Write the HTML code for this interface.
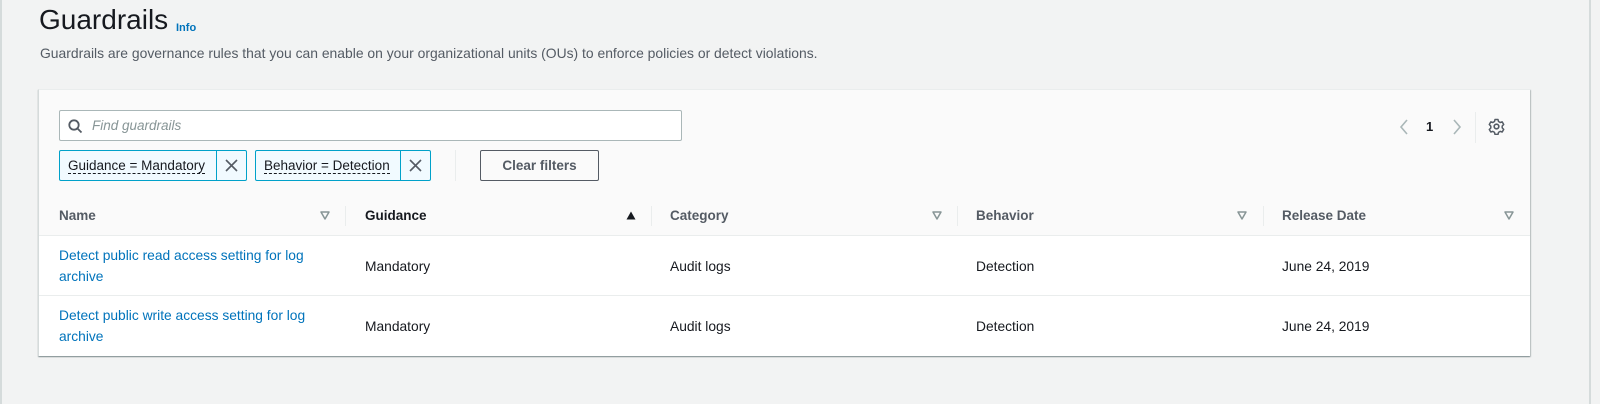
<!DOCTYPE html><html><head><style>
*{box-sizing:border-box;margin:0;padding:0}
body{width:1600px;height:404px;background:#f2f3f3;font-family:"Liberation Sans",sans-serif;color:#16191f;position:relative;overflow:hidden}
.lb{position:absolute;left:0;top:0;width:2px;height:404px;background:#d5dbdb}
.rb{position:absolute;left:1589px;top:0;width:2px;height:404px;background:#d5dbdb}
.a{position:absolute;white-space:nowrap}
h1{position:absolute;left:39px;top:4px;font-size:28px;font-weight:normal}
.info{position:absolute;left:176px;top:22px;font-size:11px;font-weight:bold;color:#0073bb}
.desc{left:40px;top:45px;font-size:13.9px;color:#545b64}
.card{position:absolute;left:38px;top:89px;width:1492px;height:267px;background:#fff;border-top:1px solid #eaeded;border-left:1px solid #d5dbdb;box-shadow:0 1px 1px 0 rgba(0,28,36,.35),1px 1px 1px 0 rgba(0,28,36,.2)}
.hdr{position:absolute;left:0;top:0;width:100%;height:146px;background:#fafafa;border-bottom:1px solid #eaeded}
.search{position:absolute;left:20px;top:20px;width:623px;height:31px;border:1px solid #aab7b8;background:#fff;border-radius:2px}
.search span{position:absolute;left:32px;top:7px;font-size:13.5px;font-style:italic;color:#879596}
.tok{position:absolute;top:60px;height:31px;border:1px solid #00a1c9;background:#f1faff;border-radius:2px;font-size:13.5px}
.tok .t{position:absolute;left:8px;top:7px;border-bottom:1px dashed #16191f;line-height:15px}
.tok .x{position:absolute;right:0;top:0;width:30px;height:29px;border-left:1px solid #00a1c9}
.clr{position:absolute;left:441px;top:60px;width:119px;height:31px;border:1px solid #545b64;border-radius:2px;font-size:13.5px;font-weight:bold;color:#545b64;text-align:center;line-height:29px}
.th{position:absolute;top:118px;font-size:13.5px;font-weight:bold;color:#545b64}
.sep{position:absolute;top:116px;width:1px;height:20px;background:#eaeded}
.tri{position:absolute;top:121px}
.row{position:absolute;left:0;width:100%;border-bottom:1px solid #eaeded}
.c{position:absolute;font-size:13.8px}
.lnk{color:#0073bb;line-height:21px}
</style></head><body>
<div class="lb"></div><div class="rb"></div>
<h1>Guardrails</h1><div class="a info">Info</div>
<div class="a desc">Guardrails are governance rules that you can enable on your organizational units (OUs) to enforce policies or detect violations.</div>
<div class="card">
<div class="hdr">
<div class="search"><svg style="position:absolute;left:8px;top:8px" width="15" height="15" viewBox="0 0 15 15"><circle cx="6" cy="6" r="4.7" fill="none" stroke="#545b64" stroke-width="1.8"/><line x1="9.5" y1="9.5" x2="13.5" y2="13.5" stroke="#545b64" stroke-width="1.8"/></svg><span>Find guardrails</span></div>
<div class="tok" style="left:20px;width:188px"><span class="t">Guidance = Mandatory</span><div class="x"><svg style="position:absolute;left:8px;top:8px" width="13" height="13"><path d="M1 1L12 12M12 1L1 12" stroke="#545b64" stroke-width="1.6"/></svg></div></div>
<div class="tok" style="left:216px;width:176px"><span class="t">Behavior = Detection</span><div class="x"><svg style="position:absolute;left:8px;top:8px" width="13" height="13"><path d="M1 1L12 12M12 1L1 12" stroke="#545b64" stroke-width="1.6"/></svg></div></div>
<div style="position:absolute;left:416px;top:60px;width:1px;height:31px;background:#eaeded"></div>
<div class="clr">Clear filters</div>
<svg style="position:absolute;left:1359px;top:28px" width="12" height="18"><path d="M9 2L3 9L9 16" fill="none" stroke="#aab7b8" stroke-width="1.6"/></svg>
<div class="a" style="left:1387px;top:29px;font-size:13px;font-weight:bold">1</div>
<svg style="position:absolute;left:1412px;top:28px" width="12" height="18"><path d="M3 2L9 9L3 16" fill="none" stroke="#aab7b8" stroke-width="1.6"/></svg>
<div style="position:absolute;left:1436px;top:22px;width:1px;height:31px;background:#eaeded"></div>
<svg style="position:absolute;left:1449px;top:28px" width="17" height="17" viewBox="0 0 17 17"><circle cx="8.5" cy="8.5" r="2.3" fill="none" stroke="#545b64" stroke-width="1.6"/><path d="M7 1.5h3l.5 2 1.7 1 2-.6 1.5 2.6-1.5 1.5v1.9l1.5 1.5-1.5 2.6-2-.6-1.7 1-.5 2h-3l-.5-2-1.7-1-2 .6L1.3 11.5 2.8 10V8.1L1.3 6.5 2.8 3.9l2 .6 1.7-1z" fill="none" stroke="#545b64" stroke-width="1.5" stroke-linejoin="round"/></svg>
<div class="th" style="left:20px">Name</div><svg class="tri" style="left:281px" width="10" height="9"><path d="M1 1H9L5 8Z" fill="none" stroke="#879596" stroke-width="1.5" stroke-linejoin="round"/></svg><div class="sep" style="left:306px"></div>
<div class="th" style="left:326px;color:#16191f">Guidance</div><svg class="tri" style="left:587px" width="10" height="9"><path d="M0.5 8.5H9.5L5 0.5Z" fill="#16191f"/></svg><div class="sep" style="left:612px"></div>
<div class="th" style="left:631px">Category</div><svg class="tri" style="left:893px" width="10" height="9"><path d="M1 1H9L5 8Z" fill="none" stroke="#879596" stroke-width="1.5" stroke-linejoin="round"/></svg><div class="sep" style="left:918px"></div>
<div class="th" style="left:937px">Behavior</div><svg class="tri" style="left:1198px" width="10" height="9"><path d="M1 1H9L5 8Z" fill="none" stroke="#879596" stroke-width="1.5" stroke-linejoin="round"/></svg><div class="sep" style="left:1224px"></div>
<div class="th" style="left:1243px">Release Date</div><svg class="tri" style="left:1465px" width="10" height="9"><path d="M1 1H9L5 8Z" fill="none" stroke="#879596" stroke-width="1.5" stroke-linejoin="round"/></svg>
</div>
<div class="row" style="top:146px;height:60px">
<div class="c lnk" style="left:20px;top:9px">Detect public read access setting for log<br>archive</div>
<div class="c" style="left:326px;top:23px">Mandatory</div><div class="c" style="left:631px;top:23px">Audit logs</div><div class="c" style="left:937px;top:23px">Detection</div><div class="c" style="left:1243px;top:23px">June 24, 2019</div>
</div>
<div class="row" style="top:206px;height:61px;border-bottom:none">
<div class="c lnk" style="left:20px;top:9px">Detect public write access setting for log<br>archive</div>
<div class="c" style="left:326px;top:23px">Mandatory</div><div class="c" style="left:631px;top:23px">Audit logs</div><div class="c" style="left:937px;top:23px">Detection</div><div class="c" style="left:1243px;top:23px">June 24, 2019</div>
</div>
</div>
</body></html>
